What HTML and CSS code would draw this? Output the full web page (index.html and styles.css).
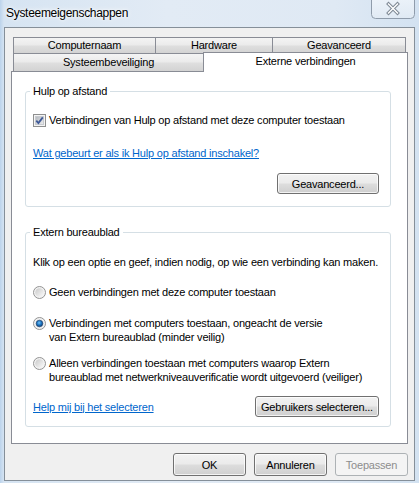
FILE: index.html
```html
<!DOCTYPE html>
<html lang="nl">
<head>
    <meta charset="UTF-8">
    <title>Systeemeigenschappen</title>
    <link rel="stylesheet" href="styles.css">
</head>
<body>
    <div class="window">
        <div class="titlebar">
            <span class="title">Systeemeigenschappen</span>
            <div class="close">
                <svg width="44" height="19" viewBox="0 0 44 19">
                    <defs>
                        <linearGradient id="closeBg" x1="0" y1="0" x2="0" y2="1">
                            <stop offset="0" stop-color="#f4f8fc" stop-opacity="0.7"/>
                            <stop offset="1" stop-color="#e2ebf4" stop-opacity="0.8"/>
                        </linearGradient>
                    </defs>
                    <path d="M0.5 -1 V14.5 A4 4 0 0 0 4.5 18.5 H39.5 A4 4 0 0 0 43.5 14.5 V-1" fill="url(#closeBg)" stroke="#8f9cab"/>
                    <path d="M17.5 4 L26.5 13 M26.5 4 L17.5 13" stroke="#7d8894" stroke-width="3.4" stroke-linecap="square"/>
                    <path d="M17.5 4 L26.5 13 M26.5 4 L17.5 13" stroke="#ffffff" stroke-width="1.4" stroke-linecap="square"/>
                </svg>
            </div>
        </div>

        <div class="client">
            <div class="tabs">
                <div class="tab-row row-back">
                    <div class="tab tab-comp">Computernaam</div>
                    <div class="tab tab-hw">Hardware</div>
                    <div class="tab tab-adv">Geavanceerd</div>
                </div>
                <div class="tab-row row-front">
                    <div class="tab tab-sys">Systeembeveiliging</div>
                    <div class="tab tab-active">Externe verbindingen</div>
                </div>
            </div>

            <div class="page">
                <!-- Hulp op afstand -->
                <fieldset class="group">
                    <legend>Hulp op afstand</legend>
                    <label class="option first">
                        <svg class="box" width="13" height="13" viewBox="0 0 13 13">
                            <defs>
                                <linearGradient id="chkFill" x1="0" y1="0" x2="1" y2="1">
                                    <stop offset="0" stop-color="#b2b7bd"/>
                                    <stop offset="1" stop-color="#eeeff0"/>
                                </linearGradient>
                            </defs>
                            <rect x="0.5" y="0.5" width="12" height="12" fill="#f4f4f4" stroke="#8e8f8f"/>
                            <rect x="2.5" y="2.5" width="8" height="8" fill="url(#chkFill)" stroke="#c8cbd0"/>
                            <path d="M3.3 6.6 L5.4 9 L9.8 3.4" fill="none" stroke="#3f5a98" stroke-width="1.8"/>
                        </svg>
                        <span>Verbindingen van Hulp op afstand met deze computer toestaan</span>
                    </label>
                    <a class="link help-link" href="#">Wat gebeurt er als ik Hulp op afstand inschakel?</a>
                    <div class="actions">
                        <button class="btn btn-adv">Geavanceerd...</button>
                    </div>
                </fieldset>

                <!-- Extern bureaublad -->
                <fieldset class="group group-rdp">
                    <legend>Extern bureaublad</legend>
                    <p class="intro">Klik op een optie en geef, indien nodig, op wie een verbinding kan maken.</p>
                    <label class="option opt-none">
                        <svg class="box" width="13" height="13" viewBox="0 0 13 13">
                            <defs>
                                <linearGradient id="radFill" x1="0" y1="0" x2="1" y2="1">
                                    <stop offset="0" stop-color="#c9c9c9"/>
                                    <stop offset="1" stop-color="#fbfbfb"/>
                                </linearGradient>
                            </defs>
                            <circle cx="6.5" cy="6.5" r="6" fill="#f2f2f2" stroke="#939393"/>
                            <circle cx="6.5" cy="6.5" r="4.3" fill="url(#radFill)"/>
                        </svg>
                        <span>Geen verbindingen met deze computer toestaan</span>
                    </label>
                    <label class="option opt-any">
                        <svg class="box" width="13" height="13" viewBox="0 0 13 13">
                            <defs>
                                <radialGradient id="radDot" cx="0.45" cy="0.4" r="0.6">
                                    <stop offset="0" stop-color="#7cc4f5"/>
                                    <stop offset="0.5" stop-color="#1f7bc8"/>
                                    <stop offset="1" stop-color="#0c3f78"/>
                                </radialGradient>
                            </defs>
                            <circle cx="6.5" cy="6.5" r="6" fill="#f2f2f2" stroke="#939393"/>
                            <circle cx="6.5" cy="6.5" r="4.3" fill="#dfe3e7"/>
                            <circle cx="6.5" cy="6.5" r="3.3" fill="url(#radDot)" stroke="#22406a" stroke-width="0.6"/>
                        </svg>
                        <span>Verbindingen met computers toestaan, ongeacht de versie<br>van Extern bureaublad (minder veilig)</span>
                    </label>
                    <label class="option opt-nla">
                        <svg class="box" width="13" height="13" viewBox="0 0 13 13">
                            <circle cx="6.5" cy="6.5" r="6" fill="#f2f2f2" stroke="#939393"/>
                            <circle cx="6.5" cy="6.5" r="4.3" fill="url(#radFill)"/>
                        </svg>
                        <span>Alleen verbindingen toestaan met computers waarop Extern<br>bureaublad met netwerkniveauverificatie wordt uitgevoerd (veiliger)</span>
                    </label>
                    <div class="actions split">
                        <a class="link" href="#">Help mij bij het selecteren</a>
                        <button class="btn btn-users">Gebruikers selecteren...</button>
                    </div>
                </fieldset>
            </div>

            <div class="dialog-buttons">
                <button class="btn btn-dlg">OK</button>
                <button class="btn btn-dlg">Annuleren</button>
                <button class="btn btn-dlg" disabled>Toepassen</button>
            </div>
        </div>
    </div>
</body>
</html>
```

FILE: styles.css
```css
/* venster */
body {
    margin: 0;
    padding: 0;
    font-family: "Liberation Sans", Arial, sans-serif;
    font-size: 11px;
    letter-spacing: -0.2px;
    color: #000;
}

.window {
    width: 419px;
    height: 483px;
    overflow: hidden;
    background: linear-gradient(90deg, #bcd3eb 0, #d6e4f2 4px, #e2ebf5 40%, #dfe9f4 80%, #d3e2f1 100%);
}

/* titelbalk */
.titlebar {
    height: 27px;
    display: flex;
    justify-content: space-between;
    align-items: flex-start;
}

.title {
    padding: 6px 0 0 6px;
    font-size: 12px;
    line-height: 14px;
    letter-spacing: -0.3px;
    text-shadow: 0 0 6px #fff, 0 0 3px #fff;
}

.close {
    margin: 0 4px 0 0;
    height: 19px;
}

.close svg {
    display: block;
}

/* werkgebied */
.client {
    box-sizing: border-box;
    width: 411px;
    height: 454px;
    margin-left: 4px;
    padding: 9px 6px 0 6px;
    background: #f0f0f0;
    border: 1px solid #858f99;
}

/* tabbladen */
.tabs {
    padding-left: 2px;
}

.tab-row {
    display: flex;
}

.row-back {
    height: 16px;
}

.row-front {
    height: 18px;
}

.tab {
    box-sizing: border-box;
    border: 1px solid #898c95;
    border-bottom: 0;
    background: linear-gradient(#f4f4f4, #ebebeb 45%, #dedede 55%, #d3d3d3);
    text-align: center;
}

.tab + .tab {
    margin-left: -1px;
}

.row-back .tab {
    height: 16px;
    line-height: 15px;
}

.row-front .tab {
    height: 18px;
    line-height: 17px;
}

.tab-comp { width: 143px; }
.tab-hw   { width: 118px; }
.tab-adv  { width: 134px; }
.tab-sys  { width: 191px; }

.row-front .tab-active {
    position: relative;
    z-index: 1;
    width: 205px;
    height: 20px;
    margin-top: -1px;
    line-height: 17px;
    background: #fff;
}

.page {
    box-sizing: border-box;
    height: 373px;
    padding: 12px 16px 0 13px;
    background: #fff;
    border: 1px solid #898c95;
}

/* groepen */
.group {
    margin: 0;
    padding: 0 11px 12px 7px;
    min-width: 0;
    border: 1px solid #d5dfe5;
    border-radius: 3px;
}

.group legend {
    margin-left: -3px;
    padding: 0 3px;
    line-height: 14px;
}

.group-rdp {
    margin-top: 18px;
    padding-bottom: 9px;
}

.option {
    display: flex;
    align-items: flex-start;
    gap: 3px;
    line-height: 14px;
    white-space: nowrap;
}

.option .box {
    flex: none;
    margin-top: 1px;
}

.option.first { margin-top: 15px; }
.opt-none { margin-top: 16px; }
.opt-any { margin-top: 17px; }
.opt-nla { margin-top: 12px; }

.intro {
    margin: 16px 0 0 0;
    line-height: 14px;
    white-space: nowrap;
}

.link {
    display: block;
    color: #0066cc;
    line-height: 14px;
}

.help-link {
    margin-top: 19px;
}

.actions {
    display: flex;
    justify-content: flex-end;
    margin-top: 13px;
}

.actions.split {
    justify-content: space-between;
    align-items: center;
    margin-top: 12px;
}

/* knoppen */
.btn {
    box-sizing: border-box;
    height: 21px;
    padding: 0;
    font-family: inherit;
    font-size: 11px;
    letter-spacing: -0.2px;
    color: #000;
    border: 1px solid #707070;
    border-radius: 3px;
    background: linear-gradient(#f2f2f2, #ebebeb 48%, #dddddd 52%, #cfcfcf);
    box-shadow: inset 0 0 0 1px rgba(255, 255, 255, 0.75);
}

.btn-adv   { width: 102px; }
.btn-users { width: 124px; }

.dialog-buttons {
    display: flex;
    justify-content: flex-end;
    gap: 8px;
    margin-top: 9px;
}

.btn-dlg {
    width: 73px;
    height: 23px;
}

.btn:disabled {
    color: #8d8d8d;
    border-color: #adb2b5;
    background: #f4f4f4;
    box-shadow: none;
}
```
